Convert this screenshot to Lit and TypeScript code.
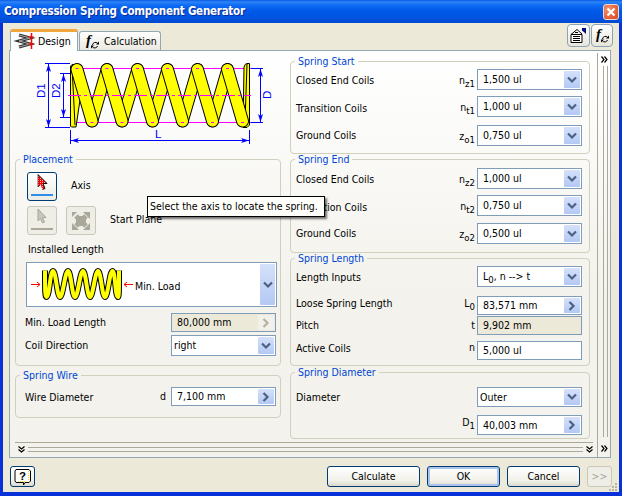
import { LitElement, html, css, svg } from "lit";
import { customElement } from "lit/decorators.js";

const down = (off = false) => html`<svg class="chev" viewBox="0 0 10 8" width="10" height="8"><path d="M1 1.5 5 5.5 9 1.5" fill="none" stroke=${off ? "#b5b2a4" : "#4d6185"} stroke-width="2.2"/></svg>`;
const right = (off = false) => html`<svg class="chev" viewBox="0 0 8 10" width="8" height="10"><path d="M1.5 1 5.5 5 1.5 9" fill="none" stroke=${off ? "#b5b2a4" : "#4d6185"} stroke-width="2.2"/></svg>`;
const dblRight = html`<svg class="dbl" viewBox="0 0 7 7" width="7" height="7"><path d="M.5 .5 3 3.5 .5 6.5M3.5 .5 6 3.5 3.5 6.5" fill="none" stroke="#000" stroke-width="1.2"/></svg>`;
const dblDown = html`<svg class="dbl" viewBox="0 0 7 7" width="7" height="7"><path d="M.5 .5 3.5 3 6.5 .5M.5 3.5 3.5 6 6.5 3.5" fill="none" stroke="#000" stroke-width="1.2"/></svg>`;

const fxIcon = html`<svg viewBox="0 0 18 17" width="18" height="17" class="ic">
  <text x="3" y="12" font-family="Liberation Serif" font-style="italic" font-weight="700" font-size="15">f</text>
  <path d="M9.500 12a3 3 0 0 1 5-1.800M14.500 13a3 3 0 0 1-5 1" fill="none" stroke="#000" stroke-width="1"/>
  <path d="M16 8.500v3h-3zM8 15.500v-3h3z" fill="#000"/></svg>`;

function mainSpring() {
  const tops = [77, 107, 137.5, 167.5, 197.5, 227.5];
  const t = 69.5, b = 121;
  const back = tops.slice(0, 5).map((x, i) => svg`<line x1=${x + 15} y1=${b} x2=${tops[i + 1]} y2=${t}/>`);
  const front = tops.map((x) => svg`<line x1=${x} y1=${t} x2=${x + 15} y2=${b}/>`);
  const dots = tops.map((x) => svg`<path d="M${x - 1.500} 68.500h3M${x + 13.500} 122.500h3"/>`);
  return svg`
    <g stroke="#f0f" fill="none"><path d="M71 68.500H251M71 122.500H251"/></g>
    <g stroke-linecap="round"><g stroke="#000" stroke-width="12.500">${back}</g><g stroke="#ff0" stroke-width="10.500">${back}</g></g>
    <path d="M70.500 66 73 64 80 100 76 127H71.500L70.500 126Z" fill="#ff0" stroke="#000"/>
    <path d="M72 66 75 125" stroke="#000" fill="none"/>
    <path d="M244 67Q245 63.500 247 63.500H249.500V125L247 127.500H243Z" fill="#ff0" stroke="#000"/>
    <path d="M247 64 245 122" stroke="#000" fill="none"/>
    <g stroke-linecap="round"><g stroke="#000" stroke-width="13">${front}</g><g stroke="#ff0" stroke-width="11">${front}</g></g>
    <g stroke="#f0f" fill="none">${dots}<path d="M68 95.500H251" stroke-dasharray="13 3 3 3"/></g>
    <g stroke="#00f" fill="none">
      <path d="M45 63.500H70M45 127.500H70M48.500 64V127M60 73.500H70M60 117.500H70M63.500 74V117"/>
      <path d="M251 68.500H263M251 122.500H263M260.500 69V122"/>
      <path d="M70.500 130V144M249.500 130V144M71 140.500H249"/>
    </g>
    <g fill="#00f">
      <path d="M48.500 64 51 72 48.500 70 46 72ZM48.500 127 51 119 48.500 121 46 119Z"/>
      <path d="M63.500 74 66 82 63.500 80 61 82ZM63.500 117 66 109 63.500 111 61 109Z"/>
      <path d="M260.500 69 263 77 260.500 75 258 77ZM260.500 122 263 114 260.500 116 258 114Z"/>
      <path d="M71 140.500 79 138 77 140.500 79 143ZM249 140.500 241 138 243 140.500 241 143Z"/>
    </g>
    <g fill="#00f" font-family="Liberation Sans" font-size="11.500">
      <text transform="translate(45 98) rotate(-90)">D1</text>
      <text transform="translate(60 98) rotate(-90)">D2</text>
      <text transform="translate(271 99) rotate(-90)">D</text>
      <text x="155" y="138">L</text>
    </g>`;
}

function miniSpring() {
  let d = "M45 270.500C45 290 45 297 46.500 297";
  const pk = [53, 68, 83, 98, 112.5], tr = [60, 75, 90, 105, 118];
  let x = 46.5;
  pk.forEach((p, i) => {
    d += `C${x + 3} 297 ${p - 3} 271 ${p} 271C${p + 3} 271 ${tr[i] - 3} 297 ${tr[i]} 297`;
    x = tr[i];
  });
  d += "C119 297 119 290 119 270.500";
  return svg`<path d=${d} fill="none" stroke="#000" stroke-width="6"/><path d=${d} fill="none" stroke="#ff0" stroke-width="4"/>
  <path d="M31 284.500H40M37 282 40 284.500 37 287M133 284.500H124M127 282 124 284.500 127 287" fill="none" stroke="#f00"/>`;
}

@customElement("app-root")
class AppRoot extends LitElement {
  static styles = css`
    :host { display: block; position: relative; width: 622px; height: 496px; overflow: hidden;
      font: 10.5px/13px "DejaVu Sans Condensed", "DejaVu Sans", sans-serif; font-stretch: condensed; color: #000; background: #0831d9; }
    * { box-sizing: border-box; }
    svg { display: block; flex: none; overflow: visible; }
    .title { height: 23px; padding: 0 3px 0 4px; display: flex; align-items: center; justify-content: space-between;
      background: linear-gradient(#0a5be4 0, #2c84f6 2px, #0f6cf4 5px, #0058e8 11px, #0055e2 17px, #0049cf 23px);
      color: #fff; font-weight: 700; font-size: 11.5px; letter-spacing: -.25px; text-shadow: 1px 1px 0 #0a2c9c; }
    .close { width: 16px; height: 16px; border: 1px solid #f3d9cf; border-radius: 3px; background: radial-gradient(circle at 30% 30%, #f0936f, #d8431b); display: grid; place-items: center; margin-right: 0; }
    .client { margin: 0 3px 4px; height: 469px; background: #ece9d8; padding: 0 8px 0 6px; }
    .tabs { height: 27px; display: flex; align-items: flex-end; padding-left: 1px; }
    .tab { position: relative; display: flex; align-items: center; gap: 4px; border: 1px solid #91a7b4; border-bottom: none; border-radius: 3px 3px 0 0; background: linear-gradient(#fff, #e9e8e0); height: 19px; }
    .tab.on { width: 68px; height: 22px; margin-bottom: -1px; z-index: 2; border-top: 3px solid #f0a63c; background: #fdfdfc; padding: 0 0 0 6px; gap: 4px; border-color: #f0a63c #91a7b4 #91a7b4; }
    .tab.off { width: 82px; margin-left: 1px; padding-left: 3px; gap: 3px; }
    .tools { margin-left: auto; margin-right: -2px; display: flex; gap: 1px; align-self: flex-start; margin-top: 1px; }
    .tool { width: 23px; height: 23px; border: 1px solid #8aa3b8; border-radius: 4px; background: linear-gradient(#fff, #e8e6da); display: grid; place-items: center; }
    .tool + .tool { width: 22px; }
    .panel { height: 408px; border: 1px solid #91a7b4; background: linear-gradient(#ffffff, #f3f2ec 60%); display: flex; position: relative; }
    .main { width: 587px; display: flex; flex-direction: column; }
    .cols { height: 391px; display: flex; padding-left: 5px; gap: 9px; }
    .lcol { width: 266px; display: flex; flex-direction: column; }
    .rcol { width: 300px; padding-top: 5px; display: flex; flex-direction: column; }
    .art { width: 266px; height: 103px; }
    fieldset { margin: 0; padding: 0; min-width: 0; border: 1px solid #d0d0bf; border-radius: 4px; }
    legend { margin-left: 4px; padding: 0 3px; color: #0046d5; line-height: 11px; }
    .in { display: flex; flex-direction: column; }
    .l .in { padding-left: 9px; padding-right: 4px; }
    .r .in { padding-left: 5px; padding-right: 7px; }
    .row { display: flex; align-items: center; }
    .lab { flex: 1; white-space: nowrap; }
    .sym { margin-right: 2px; white-space: nowrap; }
    .l .sym { margin-right: 5px; }
    .sym sub, .val sub { font-size: 9.5px; vertical-align: -3px; line-height: 0; }
    .up2 { margin-bottom: 4px; }
    .up4 { margin-bottom: 4px; }
    .dn1 { margin-top: 3px; }
    .dn0 { margin-top: 2px; }
    .up5 { margin-bottom: 6px; }
    .box { width: 105px; height: 21px; flex: none; border: 1px solid #7f9db9; background: #fff; display: flex; align-items: center; justify-content: space-between; padding: 0 0 0 5px; }
    .box.tight { padding-left: 2px; }
    .box.off { background: #ece9d8; }
    .h19 { height: 19px; }
    .h20 { height: 20px; }
    .h21 { height: 21px; }
    .btn { width: 16px; align-self: stretch; margin: 1px; background: linear-gradient(#d5e1fa, #b3c8f4); border-radius: 1px; display: grid; place-items: center; }
    .btn.dis { background: #f1f0ea; }
    .pt2 { padding-top: 2px; } .pt3 { padding-top: 3px; } .pt6 { padding-top: 6px; } .pt7 { padding-top: 7px; } .pt9 { padding-top: 9px; }
    .pb3 { padding-bottom: 3px; } .pb5 { padding-bottom: 5px; } .pb7 { padding-bottom: 7px; } .pb8 { padding-bottom: 8px; } .pb9 { padding-bottom: 9px; } .pb11 { padding-bottom: 11px; }
    .mt1 { margin-top: 1px; } .mt3 { margin-top: 3px; } .mt4 { margin-top: 4px; } .mt5 { margin-top: 5px; } .mt6 { margin-top: 6px; } .mt7 { margin-top: 7px; } .mt8 { margin-top: 8px; } .mt9 { margin-top: 9px; }
    .pick { width: 30px; height: 29px; flex: none; border: 1px solid #c9c7ba; border-radius: 3px; background: #efeee6; display: flex; flex-direction: column; align-items: center; }
    .pick.act { border-color: #003c74; background: linear-gradient(#fff, #ecebe3); }
    .pick.mid { justify-content: center; }
    .picks { display: flex; align-items: center; gap: 9px; padding-left: 2px; }
    .pl { margin-left: 5px; margin-bottom: 2px; }
    .inst { padding-left: 3px; }
    .big { height: 45px; margin: 6px -1px 0 1px; border: 1px solid #7f9db9; background: #fff; display: flex; align-items: center; }
    .big .cap { margin-left: 0; padding-top: 4px; flex: 1; }
    .big .btn { margin: 1px 1px 1px 0; width: 15px; }
    .bar { margin: 0 4px 0 5px; flex: 1; border-top: 1px solid #aca899; display: flex; align-items: flex-start; padding: 3px 0 0 3px; gap: 3px; }
    .rail { flex: 1; height: 5px; margin-top: 1px; border-top: 1px solid #aca899; border-bottom: 1px solid #aca899; }
    .vbar { width: 13px; margin-top: 2px; border-left: 1px solid #aca899; padding: 3px 0 5px 3px; display: flex; flex-direction: column; }
    .vrail { flex: 1; width: 5px; margin: 3px 0 8px 2px; border-left: 1px solid #aca899; border-right: 1px solid #aca899; }
    .foot { display: flex; padding-top: 8px; gap: 7px; position: relative; }
    .pb { height: 21px; width: 73px; border: 1px solid #003c74; border-radius: 3px; background: linear-gradient(#fff, #f2f1ea 70%, #dcd8cc); display: grid; place-items: center; }
    .calc { width: 93px; margin-left: auto; }
    .ok { box-shadow: inset 0 0 0 2px #a9c4ec; }
    .more { width: 25px; margin-right: -1px; border-color: #c9c7ba; color: #a8a69a; background: #efeee6; }
    .help { width: 25px; margin-left: 1px; }
    .grip { position: absolute; right: -7px; bottom: -5px; }
    .tip { position: absolute; left: 147px; top: 196px; width: 178px; height: 21px; border: 1px solid #000; background: #fffffb; padding: 0 0 0 2px; display: flex; align-items: center; box-shadow: 2px 2px 2px rgba(0,0,0,.55); white-space: nowrap; z-index: 5; }
  `;

  box(text: unknown, kind: string, h = "h21", extra = "") {
    const off = kind === "off";
    return html`<div class="box ${h} ${extra} ${kind === "ro" ? "off" : ""} ${off ? "off" : ""}"><span class="val">${text}</span>
      ${kind === "d" ? html`<div class="btn">${down()}</div>` : kind === "r" ? html`<div class="btn">${right()}</div>` : off ? html`<div class="btn dis">${right(true)}</div>` : ""}</div>`;
  }

  row(lab: string, sym: unknown, text: unknown, kind: string, h: string, cls: string, labCls = "", symCls = "", extra = "") {
    return html`<div class="row ${cls}"><span class="lab ${labCls}">${lab}</span>${sym ? html`<span class="sym ${symCls}">${sym}</span>` : ""}${this.box(text, kind, h, extra)}</div>`;
  }

  render() {
    return html`
    <div class="title"><span>Compression Spring Component Generator</span>
      <div class="close"><svg viewBox="0 0 10 10" width="10" height="10"><path d="M1.500 1.500 8.500 8.500M8.500 1.500 1.500 8.500" stroke="#fff" stroke-width="2.200"/></svg></div></div>
    <div class="client">
      <div class="tabs">
        <div class="tab on"><svg viewBox="0 0 17 17" width="17" height="17">
            <path d="M2 2 13 5 2 8 13 11 2 14" fill="none" stroke="#333" stroke-width="3"/><path d="M2 2 13 5 2 8 13 11 2 14" fill="none" stroke="#aaa" stroke-width="1"/>
            <path d="M14.500 0V16" stroke="#f00" stroke-width="1.500"/><path d="M11 4H17M11 11H17" stroke="#f00"/></svg><span>Design</span></div>
        <div class="tab off">${fxIcon}<span>Calculation</span></div>
        <div class="tools">
          <div class="tool"><svg viewBox="0 0 19 17" width="19" height="17"><path d="M2 7.500H13V15.500H2Z" fill="#fff" stroke="#000"/><path d="M2 7.500 8 2.500 13 7" fill="none" stroke="#000"/><path d="M4 9.500h7M4 11.500h7M4 13.500h7M6 5.500h3" stroke="#000"/><path d="M13 1h4v6l-1.500-1.500-2.500-2z" fill="#000a80"/></svg></div>
          <div class="tool">${fxIcon}</div>
        </div>
      </div>
      <div class="panel">
        <div class="main">
          <div class="cols">
            <div class="lcol l">
              <svg class="art" viewBox="15 51 266 103">${mainSpring()}</svg>
              <fieldset><legend>Placement</legend><div class="in pt7 pb9">
                <div class="picks"><div class="pick act">
                    <svg viewBox="0 0 12 16" width="12" height="16" class="mt1"><defs><pattern id="ck" width="2" height="2" patternUnits="userSpaceOnUse"><rect width="2" height="2" fill="#f00"/><rect width="1" height="1" fill="#ffb0b0"/></pattern></defs><path d="M2 .5V13L4.500 10.500 6.500 15.500 9 14.500 7 9.500H11Z" fill="url(#ck)"/><path d="M2 .5 11 9.500H7L9 14.500 6.500 15.500" fill="none" stroke="#000" stroke-width=".9"/><path d="M2 .5V13L4.500 10.500" fill="none" stroke="#000" stroke-width=".6"/></svg>
                    <svg viewBox="0 0 22 3" width="22" height="3" class="mt4"><rect width="22" height="2" fill="#2f8fee"/></svg></div><span class="pl">Axis</span></div>
                <div class="picks mt5"><div class="pick">
                    <svg viewBox="0 0 12 16" width="12" height="16" class="mt1"><path d="M2 1V13L4.500 10.500 6.500 15 8.500 14 6.500 9.500H10Z" fill="#c9c7ba" stroke="#a8a69a"/></svg>
                    <svg viewBox="0 0 22 3" width="22" height="3" class="mt4"><rect width="22" height="2" fill="#aca899"/></svg></div>
                  <div class="pick mid"><svg viewBox="0 0 20 20" width="20" height="20"><path d="M5 5 15 15M15 5 5 15" stroke="#aaa898" stroke-width="5"/><path d="M1 19V12L8 19ZM19 1V8L12 1ZM12 19 19 12V19ZM1 1H6L1 6Z" fill="#aaa898"/><rect x="5" y="5" width="10" height="10" fill="#aaa898"/></svg></div>
                  <span class="pl">Start Plane</span></div>
                <div class="inst mt8">Installed Length</div>
                <div class="big"><svg viewBox="27 263 108 43" width="108" height="43">${miniSpring()}</svg><span class="cap">Min. Load</span><div class="btn">${down()}</div></div>
                ${this.row("Min. Load Length", "", "80,000 mm", "off", "h19", "mt6")}
                ${this.row("Coil Direction", "", "right", "d", "h21", "mt3", "", "", "tight")}
              </div></fieldset>
              <fieldset class="mt4"><legend>Spring Wire</legend><div class="in pt6 pb11">
                ${this.row("Wire Diameter", "d", "7,100 mm", "r", "h19", "", "dn0")}
              </div></fieldset>
            </div>
            <div class="rcol r">
              <fieldset><legend>Spring Start</legend><div class="in pt2 pb7">
                ${this.row("Closed End Coils", html`n<sub>z1</sub>`, "1,500 ul", "d", "h21", "", "dn0", "dn0")}
                ${this.row("Transition Coils", html`n<sub>t1</sub>`, "1,000 ul", "d", "h21", "mt6", "dn1", "dn0")}
                ${this.row("Ground Coils", html`z<sub>o1</sub>`, "0,750 ul", "d", "h21", "mt8", "", "dn0")}
              </div></fieldset>
              <fieldset><legend>Spring End</legend><div class="in pt3 pb8">
                ${this.row("Closed End Coils", html`n<sub>z2</sub>`, "1,000 ul", "d", "h21", "", "dn0", "dn0")}
                ${this.row("Transition Coils", html`n<sub>t2</sub>`, "0,750 ul", "d", "h21", "mt6", "dn1", "dn0")}
                ${this.row("Ground Coils", html`z<sub>o2</sub>`, "0,500 ul", "d", "h21", "mt7", "", "dn0")}
              </div></fieldset>
              <fieldset><legend>Spring Length</legend><div class="in pt2 pb5">
                ${this.row("Length Inputs", "", html`L<sub>0</sub>, n --&gt; t`, "d", "h21", "", "dn0")}
                ${this.row("Loose Spring Length", html`L<sub>0</sub>`, "83,571 mm", "r", "h19", "mt9", "up4", "up2")}
                ${this.row("Pitch", "t", "9,902 mm", "ro", "h19", "mt1", "", "")}
                ${this.row("Active Coils", "n", "5,000 ul", "", "h19", "mt6", "up4", "up5")}
              </div></fieldset>
              <fieldset class="mt1"><legend>Spring Diameter</legend><div class="in pt9 pb3">
                ${this.row("Diameter", "", "Outer", "d", "h20", "", "", "", "tight")}
                ${this.row("", html`D<sub>1</sub>`, "40,003 mm", "r", "h20", "mt8", "", "up5")}
              </div></fieldset>
            </div>
          </div>
          <div class="bar">${dblDown}<div class="rail"></div>${dblDown}</div>
        </div>
        <div class="vbar">${dblRight}<div class="vrail"></div>${dblRight}</div>
      </div>
      <div class="foot">
        <div class="pb help"><svg viewBox="0 0 18 18" width="18" height="18"><path d="M2 1.500H15L16.500 3V13L15 14.500H11L9.500 17V14.500H2L1 13V3Z" fill="#fff" stroke="#000"/><path d="M14.500 3v10M4 13.500h8" stroke="#ffd800" stroke-dasharray="1 1"/><text x="5" y="12" font-family="Liberation Sans" font-weight="700" font-size="11.500" fill="#000">?</text></svg></div>
        <div class="pb calc">Calculate</div>
        <div class="pb ok">OK</div>
        <div class="pb">Cancel</div>
        <div class="pb more">&gt;&gt;</div>
        <svg class="grip" viewBox="0 0 10 10" width="10" height="10"><path d="M7 1h2v2h-2zM7 4h2v2h-2zM7 7h2v2h-2zM4 4h2v2h-2zM4 7h2v2h-2zM1 7h2v2h-2z" fill="#b8b5a6"/></svg>
      </div>
    </div>
    <div class="tip">Select the axis to locate the spring.</div>`;
  }
}
